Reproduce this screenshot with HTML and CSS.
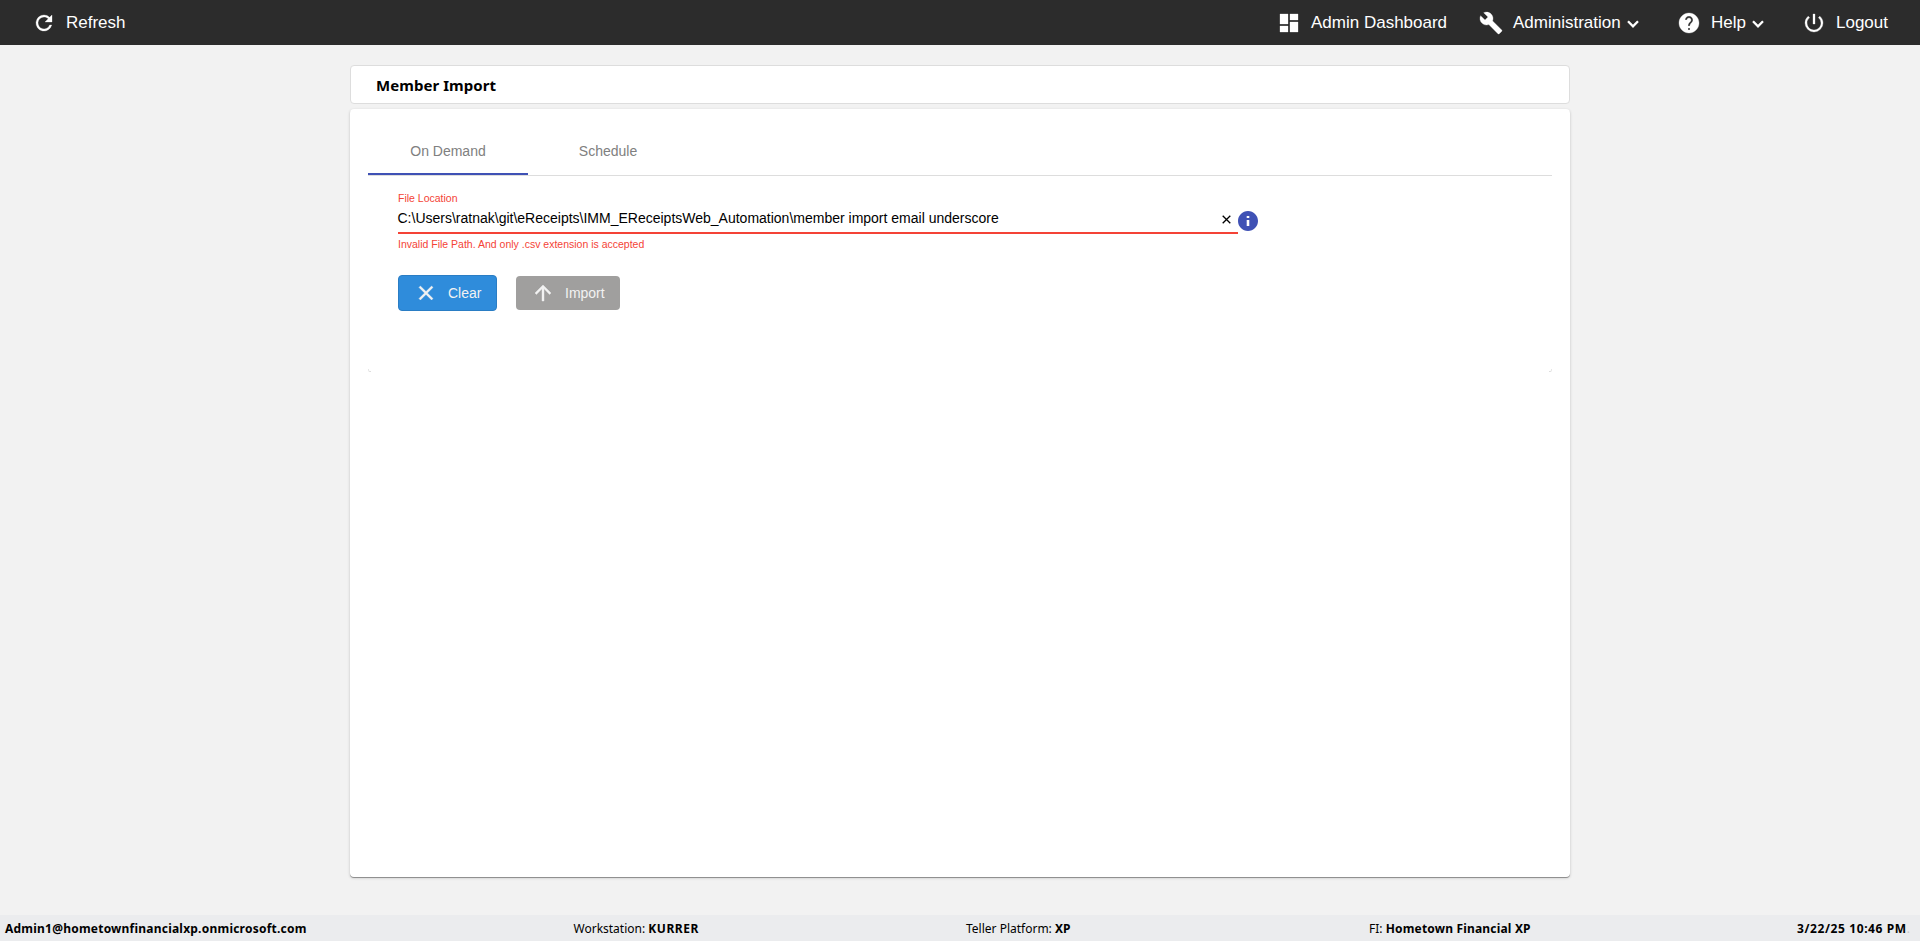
FILE: index.html
```html
<!DOCTYPE html>
<html lang="en">
<head>
<meta charset="utf-8">
<title>Member Import</title>
<link rel="stylesheet" href="styles.css">
</head>
<body>
<header class="topbar">
  <a class="nav nav-refresh"><svg class="ic" width="24" height="24" viewBox="0 0 24 24"><path d="M17.65 6.35A7.96 7.96 0 0 0 12 4a8 8 0 1 0 7.73 10h-2.08A6 6 0 1 1 12 6c1.66 0 3.14.69 4.22 1.78L13 11h7V4z"/></svg><span>Refresh</span></a>
  <a class="nav nav-dash"><svg class="ic" width="24" height="24" viewBox="0 0 24 24"><path d="M3 13h8V3H3v10zm0 8h8v-6H3v6zm10 0h8V11h-8v10zm0-18v6h8V3h-8z"/></svg><span>Admin Dashboard</span></a>
  <a class="nav nav-admin"><svg class="ic" width="24" height="24" viewBox="0 0 24 24"><path d="M22.7 19l-9.100-9.100c.9-2.300.4-5-1.500-6.900-2-2-5-2.400-7.400-1.300L9 6 6 9 1.600 4.700C.4 7.100.9 10.100 2.900 12.100c1.900 1.900 4.600 2.400 6.900 1.500l9.100 9.100c.4.4 1 .4 1.400 0l2.300-2.300c.5-.4.5-1.100.1-1.400z"/></svg><span>Administration</span><svg class="chev" width="12" height="8" viewBox="0 0 12 8"><path d="M1 1.300l5 5 5-5"/></svg></a>
  <a class="nav nav-help"><svg class="ic" width="24" height="24" viewBox="0 0 24 24"><path d="M12 2C6.480 2 2 6.480 2 12s4.480 10 10 10 10-4.480 10-10S17.520 2 12 2zm1 17h-2v-2h2v2zm2.070-7.750l-.9.920C13.450 12.900 13 13.500 13 15h-2v-.5c0-1.100.45-2.100 1.170-2.830l1.240-1.260c.37-.36.59-.86.59-1.410 0-1.100-.9-2-2-2s-2 .9-2 2H8c0-2.210 1.790-4 4-4s4 1.790 4 4c0 .88-.36 1.680-.93 2.250z"/></svg><span>Help</span><svg class="chev" width="12" height="8" viewBox="0 0 12 8"><path d="M1 1.300l5 5 5-5"/></svg></a>
  <a class="nav nav-logout"><svg class="ic" width="24" height="24" viewBox="0 0 24 24"><path d="M13 3h-2v10h2V3zm4.830 2.170l-1.420 1.420A6.920 6.920 0 0 1 19 12c0 3.870-3.130 7-7 7A6.995 6.995 0 0 1 7.580 6.580L6.170 5.170A8.932 8.932 0 0 0 3 12a9 9 0 0 0 18 0c0-2.740-1.230-5.180-3.170-6.830z"/></svg><span>Logout</span></a>
</header>
<main class="content">
  <h1 class="title">Member Import</h1>
  <section class="panel">
    <nav class="tabs"><div class="tab active">On Demand</div><div class="tab">Schedule</div></nav>
    <div class="tab-body">
      <div class="field-row">
        <div class="field">
          <label class="label">File Location</label>
          <div class="input"><span class="path">C:\Users\ratnak\git\eReceipts\IMM_EReceiptsWeb_Automation\member import email underscore</span><svg class="clear-x" width="9" height="9" viewBox="0 0 9 9"><path d="M.7.700l7.600 7.600M8.300.700L.7 8.300"/></svg></div>
          <div class="error">Invalid File Path. And only .csv extension is accepted</div>
        </div>
        <svg class="info" width="24" height="24" viewBox="0 0 24 24"><path d="M12 2C6.480 2 2 6.480 2 12s4.480 10 10 10 10-4.480 10-10S17.520 2 12 2zm1.300 15h-2.600v-6h2.600v6zm0-8h-2.600V7h2.600v2z"/></svg>
      </div>
      <div class="buttons">
        <button class="btn btn-clear"><svg width="24" height="24" viewBox="0 0 24 24"><path d="M19 6.410L17.590 5 12 10.590 6.410 5 5 6.410 10.590 12 5 17.590 6.410 19 12 13.410 17.590 19 19 17.590 13.410 12z"/></svg><span>Clear</span></button>
        <button class="btn btn-import"><svg width="24" height="24" viewBox="0 0 24 24"><path d="M4 12l1.410 1.410L11 7.830V20h2V7.830l5.580 5.590L20 12l-8-8-8 8z"/></svg><span>Import</span></button>
      </div>
      <div class="corners"><i class="corner left"></i><i class="corner right"></i></div>
    </div>
  </section>
</main>
<footer class="status">
  <span><b class="user">Admin1@hometownfinancialxp.onmicrosoft.com</b></span>
  <span>Workstation: <b class="station">KURRER</b></span>
  <span>Teller Platform: <b>XP</b></span>
  <span>FI: <b class="fi">Hometown Financial XP</b></span>
  <span><b class="date">3/22/25 10:46 PM</b><i class="dot">.</i></span>
</footer>
</body>
</html>
```
FILE: styles.css
```css
* { box-sizing: border-box; }
body { margin: 0; height: 941px; display: flex; flex-direction: column; background: #f2f2f2; font-family: "Liberation Sans", Arial, sans-serif; color: #000; overflow: hidden; }
svg { display: block; flex: none; }
.topbar { height: 45px; background: #2c2c2c; display: flex; align-items: center; padding: 0 32px; color: #fff; font-size: 17px; white-space: nowrap; }
.nav { display: flex; align-items: center; height: 45px; }
.nav span { line-height: 20px; padding-top: 1px; }
.ic { fill: #fff; stroke: #fff; stroke-width: .3; }
.nav-refresh { gap: 10px; margin-right: auto; }
.nav-dash { gap: 10px; width: 202px; }
.nav-admin { gap: 10px; width: 198px; }
.nav-help { gap: 10px; width: 125px; }
.nav-logout { gap: 10px; width: 86px; }
.chev { fill: none; stroke: #fff; stroke-width: 2.3; margin-left: -4px; margin-top: 2px; }
.content { width: 1220px; margin: 20px auto 0; flex: 1; }
.title { margin: 0 0 5px; height: 39px; border: 1px solid #ddd; border-radius: 4px; background: #fff; padding-left: 25px; font: 700 15px/38px "Noto Sans", sans-serif; letter-spacing: .06px; }
.panel { height: 768px; background: #fff; border-radius: 4px; padding: 18px; box-shadow: 0 1px 0 rgba(0,0,0,.3), 0 1px 3px rgba(0,0,0,.22); }
.tabs { height: 49px; display: flex; border-bottom: 1px solid #ddd; }
.tab { width: 160px; height: 48px; text-align: center; font-size: 14px; line-height: 48px; color: #808080; }
.active { border-bottom: 2px solid #3f51b5; }
.tab-body { height: 196px; padding: 16px 30px 0; display: flex; flex-direction: column; }
.field-row { display: flex; }
.field { width: 840px; }
.label { display: block; height: 15px; font-size: 10.5px; line-height: 13px; color: #f44336; }
.input { height: 27px; display: flex; justify-content: space-between; border-bottom: 2px solid #f44336; padding: 0 7px 0 0; font-size: 14px; line-height: 22px; }
.path { margin-left: -.5px; }
.clear-x { fill: none; stroke: #000; stroke-width: 1.3; margin-top: 8px; }
.error { font-size: 10.5px; line-height: 14px; margin-top: 3px; color: #f44336; }
.info { fill: #3f51b5; margin: 17px 0 0 -2.500px; }
.buttons { display: flex; gap: 19px; align-items: center; margin-top: 24px; }
.btn { display: flex; align-items: center; border: 0; border-radius: 4px; font: 14px/20px "Liberation Sans", Arial, sans-serif; color: #f2f2f2; gap: 10px; padding: 0; }
.btn svg { fill: #f2f2f2; stroke: #f2f2f2; stroke-width: .4; }
.btn-clear { width: 99px; height: 36px; background: #2f8cdb; border: 1px solid #2a7dc4; padding-left: 15px; }
.btn-import { width: 104px; height: 34px; background: #a09f9e; padding-left: 15px; }
.corners { margin: auto -30px 0; display: flex; justify-content: space-between; }
.corner { width: 3px; height: 3px; border-bottom: 1px solid #ddd; }
.corner.left { border-left: 1px solid #e6e6e6; border-bottom-left-radius: 2px; }
.corner.right { border-right: 1px solid #e6e6e6; border-bottom-right-radius: 2px; }
.status { height: 26px; background: #ebecee; padding-left: 5px; display: grid; grid-template-columns: 568.5px 392.500px 403px 428px auto; font: 12px/27px "Noto Sans", sans-serif; white-space: nowrap; }
.user { letter-spacing: .22px; }
.station { letter-spacing: .55px; }
.fi { letter-spacing: .18px; }
.date { letter-spacing: .6px; }
.dot { font-style: normal; color: #c8c8c8; }
```
